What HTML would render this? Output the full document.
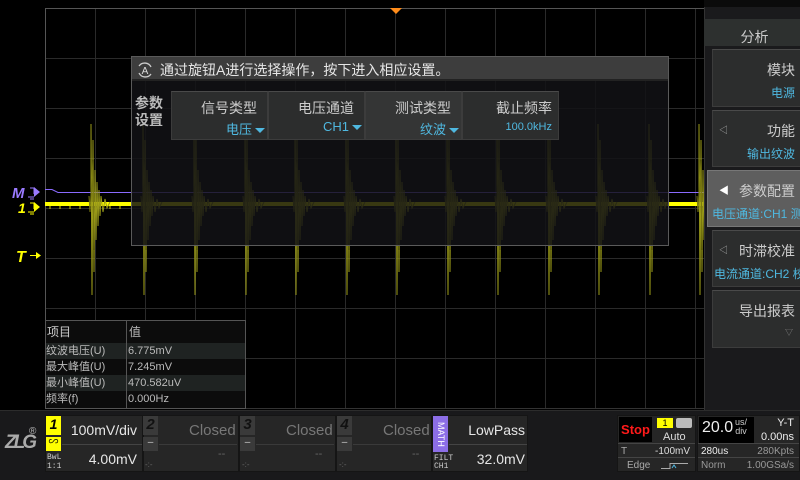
<!DOCTYPE html>
<html><head><meta charset="utf-8"><style>
*{margin:0;padding:0;box-sizing:border-box}
body{width:800px;height:480px;background:#000;position:relative;overflow:hidden;font-family:"Liberation Sans","Noto Sans CJK SC",sans-serif;color:#ddd}
.a{position:absolute}
.btn{position:absolute;background:#2c2d2d;border:1px solid #3c3c3c;border-top-color:#4a4a4a}
.cb{position:absolute;background:#262626;border:1px solid #151515}
.blue{color:#4fb8e0}
.tri{display:inline-block;width:0;height:0;border-left:5px solid transparent;border-right:5px solid transparent;border-top:5px solid #4fb8e0;vertical-align:middle;margin-left:3px}
</style></head><body>
<svg class="a" style="left:0;top:0" width="800" height="480">
<defs>
<g id="b" stroke="#9a9a18" stroke-width="1" fill="none">
<path d="M0,204 L0,124 L1,295 L2,140 L3,272 L4,170 L5,240 L6,182 L7,226 L8,190 L9,216 L10,196 L12,212 L14,199 L16,208 L19,202"/>
<path d="M-2,196 L-1,212 L2,160 L3,250" stroke="#7a7a10"/>
</g>
</defs>
<!-- grid -->
<g stroke="#2a2a2a" stroke-width="1">
<path d="M95.5,8V408M145.5,8V408M195.5,8V408M245.5,8V408M295.5,8V408M345.5,8V408M395.5,8V408M445.5,8V408M495.5,8V408M545.5,8V408M595.5,8V408M645.5,8V408M695.5,8V408"/>
<path d="M45,58.5H704M45,108.5H704M45,158.5H704M45,208.5H704M45,258.5H704M45,308.5H704M45,358.5H704"/>
</g>
<path d="M45.5,408V8.5H704" stroke="#555" fill="none"/>
<path d="M45,408.5H704" stroke="#333"/>
<!-- trigger pos -->
<path d="M390,8L402,8L396,14Z" fill="#ff8c1a"/>
<!-- purple -->
<path d="M45,189.5H52L58,192.5H704" stroke="#8a6aff" stroke-width="1" fill="none"/>
<!-- baseline -->
<rect x="45" y="202" width="659" height="4" fill="#ffff00"/>
<path d="M50,206v3M60,206v3M70,206v3M80,206v3M100,206v3M110,206v3M120,206v3" stroke="#cccc00"/>
<use href="#b" x="91"/><use href="#b" x="143"/><use href="#b" x="194"/><use href="#b" x="245"/>
<use href="#b" x="295"/><use href="#b" x="346"/><use href="#b" x="396"/><use href="#b" x="447"/>
<use href="#b" x="497"/><use href="#b" x="548"/><use href="#b" x="598"/><use href="#b" x="649"/><use href="#b" x="699"/>
<!-- markers -->
<text x="12" y="198" fill="#9a7aff" font-size="15" font-style="italic" font-weight="bold" font-family="Liberation Sans">M</text>
<path d="M30,188h4v6M28,197h6M30,199h4" stroke="#9a7aff" fill="none"/><path d="M34,187l6,5l-6,5z" fill="#9a7aff"/>
<text x="18" y="213" fill="#ffff00" font-size="14" font-style="italic" font-weight="bold" font-family="Liberation Sans">1</text>
<path d="M30,203h4v6M28,212h6M30,214h4" stroke="#ffff00" fill="none"/><path d="M34,202l6,5l-6,5z" fill="#ffff00"/>
<text x="16" y="262" fill="#ffff00" font-size="16" font-style="italic" font-weight="bold" font-family="Liberation Sans">T</text>
<path d="M30,255.5h7" stroke="#ffff00"/><path d="M36,252l5,3.5l-5,3.5z" fill="#ffff00"/>
</svg>

<!-- dialog -->
<div class="a" style="left:131px;top:56px;width:538px;height:190px;border:1px solid #5a5a5a;background:rgba(18,18,22,0.84)"></div>
<div class="a" style="left:132px;top:57px;width:536px;height:24px;background:#3d3d3d;border-bottom:2px solid #222"></div>
<svg class="a" style="left:135px;top:60px" width="20" height="20"><path d="M4,6A7,7 0 0 1 16,7M16,14A7,7 0 0 1 4,13" stroke="#ccc" stroke-width="1.3" fill="none"/><text x="10" y="14" text-anchor="middle" font-size="10" fill="#ddd" font-family="Liberation Sans">A</text></svg>
<div class="a" style="left:160px;top:60px;font-size:14px;color:#e6e6e6;white-space:nowrap">通过旋钮A进行选择操作，按下进入相应设置。</div>
<div class="a" style="left:135px;top:95px;font-size:14px;line-height:17px;font-weight:bold;color:#bbb">参数<br>设置</div>
<div class="btn" style="left:171px;top:91px;width:97px;height:49px"><div class="a" style="right:10px;top:6px;font-size:14px;color:#ccc">信号类型</div><div class="a blue" style="right:2px;top:27px;font-size:13px">电压<span class="tri"></span></div></div>
<div class="btn" style="left:268px;top:91px;width:97px;height:49px"><div class="a" style="right:10px;top:6px;font-size:14px;color:#ccc">电压通道</div><div class="a blue" style="right:2px;top:27px;font-size:13px">CH1<span class="tri"></span></div></div>
<div class="btn" style="left:365px;top:91px;width:97px;height:49px;background:#343535"><div class="a" style="right:10px;top:6px;font-size:14px;color:#ccc">测试类型</div><div class="a blue" style="right:2px;top:27px;font-size:13px">纹波<span class="tri"></span></div></div>
<div class="btn" style="left:462px;top:91px;width:97px;height:49px"><div class="a" style="right:6px;top:6px;font-size:14px;color:#ccc">截止频率</div><div class="a blue" style="right:6px;top:29px;font-size:11px">100.0kHz</div></div>

<!-- table -->
<div class="a" style="left:45px;top:320px;width:201px;height:89px;border:1px solid #555;background:#0c0c0c;font-size:11px;color:#bbb">
<div style="height:22px;line-height:22px;padding-left:1px;font-size:12px;color:#ccc">项目</div>
<div style="height:16px;line-height:16px;background:#1f2322">纹波电压(U)</div>
<div style="height:16px;line-height:16px">最大峰值(U)</div>
<div style="height:16px;line-height:16px;background:#1f2322">最小峰值(U)</div>
<div style="height:16px;line-height:16px">频率(f)</div>
<div class="a" style="left:80px;top:0;width:1px;height:88px;background:#555"></div>
<div class="a" style="left:83px;top:0;line-height:22px;font-size:12px">值</div>
<div class="a" style="left:82px;top:22px;line-height:16px">6.775mV<br>7.245mV<br>470.582uV<br>0.000Hz</div>
</div>

<!-- right panel -->
<div class="a" style="left:704px;top:0;width:96px;height:410px;background:#1a1a1c;border-left:1px solid #333"></div>
<div class="a" style="left:704px;top:0;width:96px;height:7px;background:#0b0b0b"></div>
<div class="a" style="left:704px;top:19px;width:96px;height:27px;background:#2d302f;text-align:center;font-size:14px;color:#ccc;line-height:36px;padding-left:5px">分析</div>
<div class="btn" style="left:712px;top:49px;width:90px;height:58px"><div class="a" style="right:6px;top:10px;font-size:14px;color:#ccc">模块</div><div class="a blue" style="right:6px;top:34px;font-size:12px">电源</div></div>
<div class="btn" style="left:712px;top:110px;width:90px;height:57px"><div class="a" style="left:6px;top:12px;font-size:9px;color:#aaa">◁</div><div class="a" style="right:6px;top:10px;font-size:14px;color:#ccc">功能</div><div class="a blue" style="right:6px;top:34px;font-size:12px">输出纹波</div></div>
<div class="btn" style="left:707px;top:170px;width:95px;height:57px;background:#5e5e5e;border-color:#777"><div class="a" style="left:11px;top:11px;font-size:10px;color:#fff">◀</div><div class="a" style="right:6px;top:10px;font-size:14px;color:#ccc">参数配置</div><div class="a blue" style="left:4px;top:34px;font-size:12px;white-space:nowrap">电压通道:CH1 测</div></div>
<div class="btn" style="left:712px;top:230px;width:90px;height:57px"><div class="a" style="left:6px;top:12px;font-size:9px;color:#aaa">◁</div><div class="a" style="right:6px;top:10px;font-size:14px;color:#ccc">时滞校准</div><div class="a blue" style="left:1px;top:34px;font-size:12px;white-space:nowrap">电流通道:CH2 校</div></div>
<div class="btn" style="left:712px;top:290px;width:90px;height:58px"><div class="a" style="right:6px;top:10px;font-size:14px;color:#ccc">导出报表</div><div class="a" style="right:8px;top:36px;font-size:8px;color:#888">▽</div></div>

<!-- bottom bar -->
<div class="a" style="left:0;top:410px;width:800px;height:70px;background:#19191b;border-top:1px solid #2c2c2c"></div>
<div class="a" style="left:5px;top:432px;font-size:19px;font-weight:bold;font-style:italic;color:#aaa;letter-spacing:-3px">ZLG</div>
<div class="a" style="left:29px;top:426px;font-size:10px;color:#bbb">®</div>

<div class="cb" style="left:45px;top:415px;width:98px;height:57px"></div>
<div class="a" style="left:46px;top:416px;width:15px;height:19px;background:#ffff00;color:#000;font-weight:bold;font-size:14px;text-align:center;font-style:italic">1</div>
<div class="a" style="left:46px;top:437px;width:15px;height:14px;background:#ffff00;color:#000;font-size:10px;text-align:center;line-height:12px">∽</div>
<div class="a" style="left:47px;top:453px;font-size:8px;color:#ccc;line-height:9px;font-family:'Liberation Mono',monospace">BwL<br>1:1</div>
<div class="a" style="left:62px;top:444px;width:80px;height:1px;background:#444"></div>
<div class="a" style="right:663px;top:422px;font-size:14px;color:#e6e6e6">100mV/div</div>
<div class="a" style="right:663px;top:451px;font-size:14px;color:#e6e6e6">4.00mV</div>

<div class="cb" style="left:143px;top:415px;width:96px;height:57px"></div>
<div class="cb" style="left:239px;top:415px;width:97px;height:57px"></div>
<div class="cb" style="left:336px;top:415px;width:96px;height:57px"></div>
<div class="a" style="left:143px;top:416px;font-size:15px;font-weight:bold;font-style:italic;color:#111;background:#3a3a3a;width:15px;height:19px;text-align:center">2</div>
<div class="a" style="left:240px;top:416px;font-size:15px;font-weight:bold;font-style:italic;color:#111;background:#3a3a3a;width:15px;height:19px;text-align:center">3</div>
<div class="a" style="left:337px;top:416px;font-size:15px;font-weight:bold;font-style:italic;color:#111;background:#3a3a3a;width:15px;height:19px;text-align:center">4</div>
<div class="a" style="left:143px;top:437px;width:15px;height:14px;background:#3a3a3a;color:#ccc;font-size:10px;text-align:center">–</div>
<div class="a" style="left:240px;top:437px;width:15px;height:14px;background:#3a3a3a;color:#ccc;font-size:10px;text-align:center">–</div>
<div class="a" style="left:337px;top:437px;width:15px;height:14px;background:#3a3a3a;color:#ccc;font-size:10px;text-align:center">–</div>
<div class="a" style="left:159px;top:444px;width:78px;height:1px;background:#3a3a3a"></div>
<div class="a" style="left:256px;top:444px;width:78px;height:1px;background:#3a3a3a"></div>
<div class="a" style="left:353px;top:444px;width:78px;height:1px;background:#3a3a3a"></div>
<div class="a" style="left:189px;top:422px;font-size:15px;color:#777">Closed</div>
<div class="a" style="left:286px;top:422px;font-size:15px;color:#777">Closed</div>
<div class="a" style="left:383px;top:422px;font-size:15px;color:#777">Closed</div>
<div class="a" style="left:218px;top:448px;font-size:11px;color:#666">--</div>
<div class="a" style="left:315px;top:448px;font-size:11px;color:#666">--</div>
<div class="a" style="left:412px;top:448px;font-size:11px;color:#666">--</div>
<div class="a" style="left:145px;top:460px;font-size:8px;color:#666">-:-</div>
<div class="a" style="left:242px;top:460px;font-size:8px;color:#666">-:-</div>
<div class="a" style="left:339px;top:460px;font-size:8px;color:#666">-:-</div>

<div class="cb" style="left:432px;top:415px;width:96px;height:57px"></div>
<div class="a" style="left:433px;top:416px;width:15px;height:36px;background:#8c6ee6;color:#fff;font-size:9px;writing-mode:vertical-rl;text-align:center;line-height:15px">MATH</div>
<div class="a" style="left:434px;top:455px;font-size:8px;color:#ccc;line-height:8px;font-family:'Liberation Mono',monospace">FILT<br>CH1</div>
<div class="a" style="left:449px;top:444px;width:78px;height:1px;background:#444"></div>
<div class="a" style="right:275px;top:422px;font-size:14px;color:#e6e6e6">LowPass</div>
<div class="a" style="right:275px;top:451px;font-size:14px;color:#e6e6e6">32.0mV</div>

<!-- trigger -->
<div class="cb" style="left:617px;top:415px;width:79px;height:57px"></div>
<div class="a" style="left:619px;top:417px;width:33px;height:25px;background:#000;color:#ff1a1a;font-weight:bold;font-size:13px;text-align:center;line-height:25px">Stop</div>
<div class="a" style="left:657px;top:418px;width:16px;height:10px;background:#ffff00;color:#000;font-size:9px;text-align:center;line-height:10px">1</div>
<div class="a" style="left:676px;top:418px;width:16px;height:10px;background:#bbb;border-radius:2px"></div>
<div class="a" style="left:663px;top:431px;font-size:11px;color:#ddd">Auto</div>
<div class="a" style="left:618px;top:443px;width:77px;height:1px;background:#444"></div>
<div class="a" style="left:621px;top:446px;font-size:10px;color:#aaa">T</div>
<div class="a" style="right:110px;top:446px;font-size:10px;color:#ddd">-100mV</div>
<div class="a" style="left:618px;top:457px;width:77px;height:1px;background:#444"></div>
<div class="a" style="left:627px;top:460px;font-size:10px;color:#aaa">Edge</div>
<svg class="a" style="left:660px;top:460px" width="30" height="10"><path d="M1,8.5H10V3.5H28" stroke="#aaa" fill="none"/><path d="M12,8L14,5L16,8" stroke="#4fb8e0" fill="none"/></svg>

<!-- timebase -->
<div class="cb" style="left:697px;top:415px;width:103px;height:57px"></div>
<div class="a" style="left:699px;top:417px;width:55px;height:26px;background:#000"></div>
<div class="a" style="left:702px;top:419px;font-size:16px;color:#eee">20.0</div>
<div class="a" style="left:735px;top:418px;font-size:9px;line-height:9px;color:#ccc;text-align:center">us/<br>div</div>
<div class="a" style="right:6px;top:417px;font-size:11px;color:#eee">Y-T</div>
<div class="a" style="right:6px;top:431px;font-size:11px;color:#eee">0.00ns</div>
<div class="a" style="left:698px;top:443px;width:101px;height:1px;background:#444"></div>
<div class="a" style="left:701px;top:446px;font-size:10px;color:#eee">280us</div>
<div class="a" style="right:6px;top:446px;font-size:10px;color:#999">280Kpts</div>
<div class="a" style="left:698px;top:457px;width:101px;height:1px;background:#444"></div>
<div class="a" style="left:701px;top:460px;font-size:10px;color:#999">Norm</div>
<div class="a" style="right:6px;top:460px;font-size:10px;color:#999">1.00GSa/s</div>
</body></html>
